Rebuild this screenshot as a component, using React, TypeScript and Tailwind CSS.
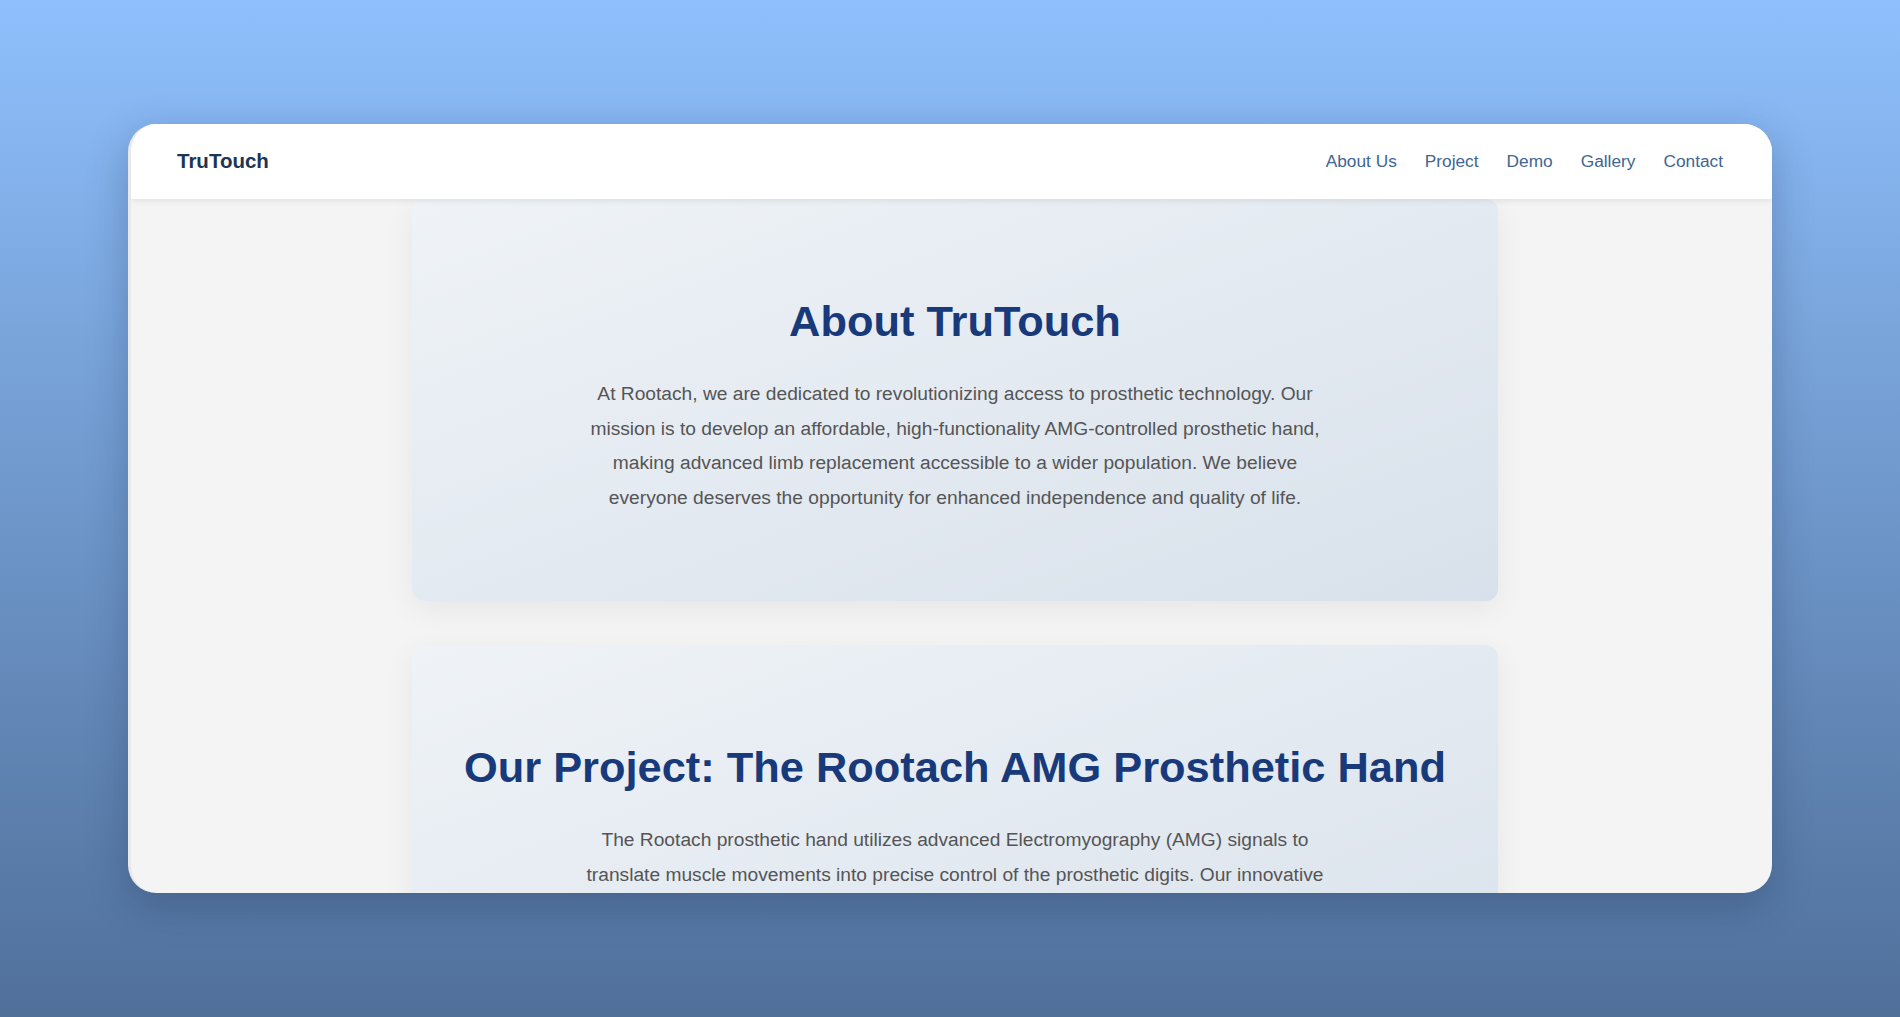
const navLinks = ['About Us', 'Project', 'Demo', 'Gallery', 'Contact'];

const Section = (props: { title: string; children: React.ReactNode }) => {
  const { title, children } = props;
  return (
    <section className="w-[1086px] shrink-0 rounded-xl bg-linear-to-br from-[#eff3f7] to-[#d8e1eb] px-10 pt-24 pb-[86px] text-center shadow-[0_8px_30px_rgba(0,0,0,0.06)]">
      <h2 className="mb-[30px] text-[43.4px] font-bold leading-[1.2] text-[#183a7a]">{title}</h2>
      <p className="mx-auto max-w-[760px] text-[19.2px] leading-[1.8] text-[#555]">{children}</p>
    </section>
  );
};

export default function App() {
  return (
    <div className="min-h-screen w-full bg-linear-to-b from-[#8fc0fd] to-[#50709a] pt-[124px] font-['Liberation_Sans',Arial,sans-serif]">
      <div className="mx-auto flex h-[769px] w-[1644px] flex-col overflow-hidden rounded-[28px] border-l-[3px] border-[#e9e9e9] bg-[#f4f4f4] shadow-[0_12px_40px_rgba(20,40,80,0.28)]">
        <header className="relative z-10 flex h-[75px] shrink-0 items-center justify-between bg-white pl-[46px] pr-[49px] shadow-[0_2px_6px_rgba(0,0,0,0.08)]">
          <div className="text-[20.5px] font-bold text-[#1c3553]">TruTouch</div>
          <nav className="flex items-center gap-7">
            {navLinks.map((l) => (
              <a key={l} href="#" className="text-[17.3px] text-[#416592]">
                {l}
              </a>
            ))}
          </nav>
        </header>

        <main className="flex flex-1 flex-col items-center gap-[44px] overflow-hidden pl-[7px]">
          <Section title="About TruTouch">
            At Rootach, we are dedicated to revolutionizing access to prosthetic technology. Our mission is to
            develop an affordable, high-functionality AMG-controlled prosthetic hand, making advanced limb
            replacement accessible to a wider population. We believe everyone deserves the opportunity for
            enhanced independence and quality of life.
          </Section>
          <Section title="Our Project: The Rootach AMG Prosthetic Hand">
            The Rootach prosthetic hand utilizes advanced Electromyography (AMG) signals to translate muscle
            movements into precise control of the prosthetic digits. Our innovative design combines
            lightweight materials with responsive sensors to deliver natural, intuitive movement at a fraction
            of the cost of traditional prosthetics.
          </Section>
        </main>
      </div>
    </div>
  );
}
